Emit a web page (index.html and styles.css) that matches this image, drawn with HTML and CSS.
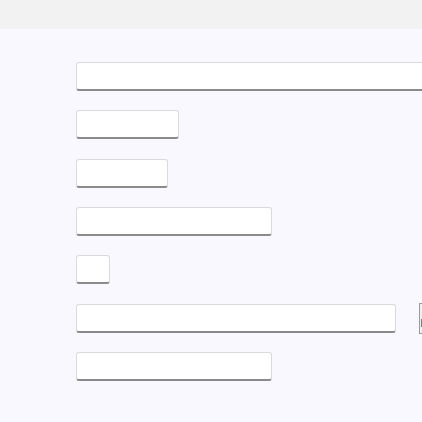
FILE: index.html
```html
<!DOCTYPE html>
<html>
<head>
<meta charset="utf-8">
<link rel="stylesheet" href="styles.css">
</head>
<body>
<header class="topbar"></header>
<main class="form">
  <input class="field field-full" type="text">
  <input class="field w-103" type="text">
  <input class="field w-92" type="text">
  <input class="field w-196" type="text">
  <input class="field w-34" type="text">
  <div class="row">
    <input class="field w-320" type="text">
    <div class="picker"><span class="swatch"></span></div>
  </div>
  <input class="field w-196" type="text">
</main>
</body>
</html>
```

FILE: styles.css
```css
html, body {
  margin: 0;
  padding: 0;
  overflow: hidden;
  width: 422px;
  height: 422px;
  background: #f8f8fe;
  font-family: "Liberation Sans", Arial, sans-serif;
}

.topbar {
  height: 29px;
  background: #f2f2f2;
}

.form {
  display: flex;
  flex-direction: column;
  align-items: flex-start;
  gap: 19.33px;
  padding: 33px 0 0 76px;
}

.field {
  box-sizing: border-box;
  height: 29px;
  margin: 0;
  padding: 0;
  background: #ffffff;
  border: 1px solid #dadada;
  border-bottom: 2px solid #8a8a8a;
  border-radius: 3px;
  outline: none;
  flex: none;
}

.field-full { width: 400px; }
.w-103 { width: 103px; }
.w-92 { width: 92px; }
.w-196 { width: 196px; }
.w-34 { width: 34px; }
.w-320 { width: 320px; }

.row {
  display: flex;
  align-items: flex-start;
  gap: 23px;
  height: 29px;
}

.picker {
  box-sizing: border-box;
  flex: none;
  width: 40px;
  height: 31px;
  margin-top: -1px;
  border: 1px solid #9a9a9a;
  background: #f0f0f0;
  padding: 15px 0 6px 1px;
  display: flex;
}

.swatch {
  width: 30px;
  height: 8px;
  background: #d9534f;
}
```
